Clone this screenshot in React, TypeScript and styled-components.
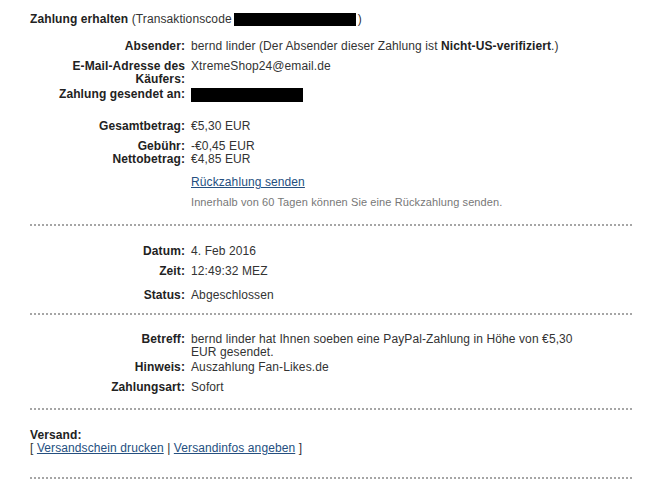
import React from 'react';
import styled, { createGlobalStyle } from 'styled-components';

const GlobalStyle = createGlobalStyle`
  body {
    margin: 0;
    background: #fff;
    font-family: "Liberation Sans", Arial, sans-serif;
    font-size: 12px;
    line-height: 13px;
    letter-spacing: 0.1px;
    color: #333;
  }
`;

const Page = styled.div`
  width: 654px;
  height: 490px;
  padding: 13px 0 0 30px;
  box-sizing: border-box;
  overflow: hidden;
`;

const Title = styled.div`
  white-space: nowrap;
  display: flex;
  align-items: center;
  b {
    color: #222;
  }
`;

const Redacted = styled.span<{ $w: number; $h?: number }>`
  display: inline-block;
  width: ${(p) => p.$w}px;
  height: ${(p) => p.$h || 14}px;
  background: #000;
  margin: 0 2px;
`;

const Rows = styled.div`
  margin-left: 25px;
`;

const Row = styled.div<{ $top?: number; $valueWidth?: number }>`
  display: grid;
  grid-template-columns: 130px ${(p) => (p.$valueWidth ? `${p.$valueWidth}px` : '1fr')};
  column-gap: 6px;
  margin-top: ${(p) => p.$top || 0}px;
`;

const Label = styled.div`
  text-align: right;
  font-weight: bold;
  color: #222;
`;

const Value = styled.div`
  b {
    color: #222;
  }
`;

const Link = styled.a`
  color: #254f7f;
  text-decoration: underline;
  cursor: pointer;
`;

const Note = styled.div`
  font-size: 11px;
  color: #777;
`;

const Dots = styled.div<{ $top: number }>`
  width: 602px;
  height: 2px;
  margin-top: ${(p) => p.$top}px;
  background: repeating-linear-gradient(to right, #a6a6a6 0 2px, transparent 2px 4px);
`;

const Shipping = styled.div<{ $top: number }>`
  margin-top: ${(p) => p.$top}px;
`;

const ShippingTitle = styled.div`
  font-weight: bold;
  color: #222;
`;

const App = () => (
  <>
    <GlobalStyle />
    <Page>
      <Title>
        <b>Zahlung erhalten</b>
        &nbsp;(Transaktionscode
        <Redacted $w={122} $h={13} />
        )
      </Title>

      <Rows>
        <Row $top={14}>
          <Label>Absender:</Label>
          <Value>
            bernd linder (Der Absender dieser Zahlung ist <b>Nicht-US-verifiziert</b>.)
          </Value>
        </Row>
        <Row $top={7}>
          <Label>E-Mail-Adresse des Käufers:</Label>
          <Value>XtremeShop24@email.de</Value>
        </Row>
        <Row $top={2}>
          <Label>Zahlung gesendet an:</Label>
          <Value>
            <Redacted $w={112} $h={14} style={{ margin: 0, verticalAlign: 'middle' }} />
          </Value>
        </Row>

        <Row $top={18}>
          <Label>Gesamtbetrag:</Label>
          <Value>€5,30 EUR</Value>
        </Row>
        <Row $top={7}>
          <Label>Gebühr:</Label>
          <Value>-€0,45 EUR</Value>
        </Row>
        <Row>
          <Label>Nettobetrag:</Label>
          <Value>€4,85 EUR</Value>
        </Row>
        <Row $top={10}>
          <Label />
          <Value>
            <Link>Rückzahlung senden</Link>
          </Value>
        </Row>
        <Row $top={7}>
          <Label />
          <Note>Innerhalb von 60 Tagen können Sie eine Rückzahlung senden.</Note>
        </Row>
      </Rows>

      <Dots $top={15} />

      <Rows>
        <Row $top={19}>
          <Label>Datum:</Label>
          <Value>4. Feb 2016</Value>
        </Row>
        <Row $top={7}>
          <Label>Zeit:</Label>
          <Value>12:49:32 MEZ</Value>
        </Row>
        <Row $top={11}>
          <Label>Status:</Label>
          <Value>Abgeschlossen</Value>
        </Row>
      </Rows>

      <Dots $top={11} />

      <Rows>
        <Row $top={18} $valueWidth={400}>
          <Label>Betreff:</Label>
          <Value>bernd linder hat Ihnen soeben eine PayPal-Zahlung in Höhe von €5,30 EUR gesendet.</Value>
        </Row>
        <Row $top={2}>
          <Label>Hinweis:</Label>
          <Value>Auszahlung Fan-Likes.de</Value>
        </Row>
        <Row $top={7}>
          <Label>Zahlungsart:</Label>
          <Value>Sofort</Value>
        </Row>
      </Rows>

      <Dots $top={14} />

      <Shipping $top={19}>
        <ShippingTitle>Versand:</ShippingTitle>
        <div>
          [ <Link>Versandschein drucken</Link> | <Link>Versandinfos angeben</Link> ]
        </div>
      </Shipping>

      <Dots $top={22} />
    </Page>
  </>
);

export default App;
